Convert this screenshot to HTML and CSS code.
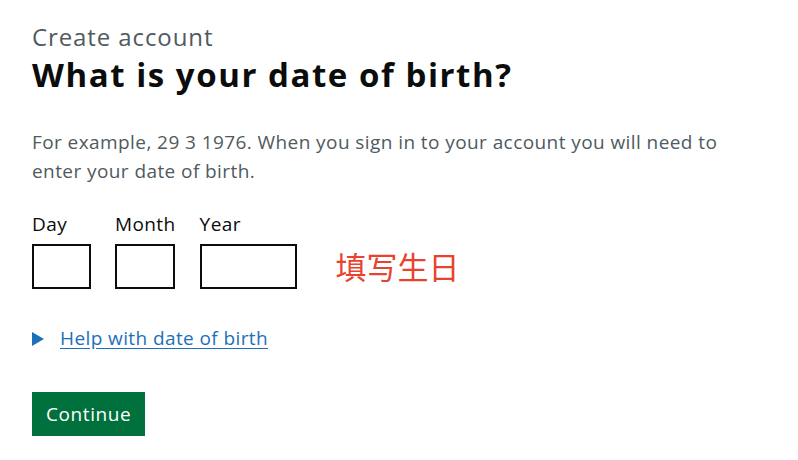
FILE: index.html
```html
<!DOCTYPE html>
<html lang="en">
<head>
  <meta charset="UTF-8">
  <title>Create account - What is your date of birth?</title>
  <meta name="viewport" content="width=device-width, initial-scale=1.0">
  <link rel="stylesheet" href="styles.css">
</head>
<body>
  <main class="page">
    <span class="caption">Create account</span>
    <h1 class="heading">What is your date of birth?</h1>

    <p class="hint">For example, 29 3 1976. When you sign in to your account you will need to enter your date of birth.</p>

    <div class="date-row">
      <div class="date-input">
        <div class="date-item">
          <label for="dob-day">Day</label>
          <input class="field field-day" id="dob-day" type="text" inputmode="numeric">
        </div>
        <div class="date-item">
          <label for="dob-month">Month</label>
          <input class="field field-month" id="dob-month" type="text" inputmode="numeric">
        </div>
        <div class="date-item">
          <label for="dob-year">Year</label>
          <input class="field field-year" id="dob-year" type="text" inputmode="numeric">
        </div>
      </div>
      <!-- 备注 -->
      <span class="note">填写生日</span>
    </div>

    <details class="details">
      <summary><span class="details-text">Help with date of birth</span></summary>
    </details>

    <button class="button" type="submit">Continue</button>
  </main>
</body>
</html>
```

FILE: styles.css
```css
body {
  margin: 0;
  background: #ffffff;
  color: #0b0c0c;
  font-family: "Open Sans", "Noto Sans", Arial, sans-serif;
  letter-spacing: 0.4px;
}

.page {
  padding: 20px 32px 0;
}

.caption {
  display: block;
  font-size: 24px;
  line-height: 33px;
  letter-spacing: 0.9px;
  color: #505a5f;
}

.heading {
  margin: -1px 0 31px;
  font-size: 33px;
  line-height: 45px;
  letter-spacing: 1.55px;
  font-weight: 700;
}

.hint {
  margin: 0 0 26px;
  font-size: 19px;
  line-height: 29px;
  letter-spacing: 0.42px;
  color: #505a5f;
  max-width: 720px;
}

.date-row {
  display: flex;
  align-items: flex-end;
}

.date-input {
  display: flex;
  gap: 24px;
}

.date-item label {
  display: block;
  font-size: 19px;
  line-height: 25px;
  margin-bottom: 7px;
}

.field {
  display: block;
  box-sizing: border-box;
  height: 45px;
  border: 2px solid #0b0c0c;
  border-radius: 0;
  padding: 5px;
  font: inherit;
}

.field-day {
  width: 59px;
}

.field-month {
  width: 60px;
}

.field-year {
  width: 97px;
}

.note {
  margin: 0 0 5px 39px;
  font-family: "Noto Sans CJK SC", sans-serif;
  font-size: 31px;
  line-height: 36px;
  letter-spacing: 0;
  color: #e8432f;
}

.details {
  margin: 37px 0 41px;
  font-size: 19px;
  line-height: 25px;
}

.details summary {
  display: inline-block;
  position: relative;
  padding-left: 28px;
  color: #1d70b8;
  cursor: pointer;
  list-style: none;
}

.details summary::-webkit-details-marker {
  display: none;
}

/* arrow */
.details summary::before {
  content: "";
  position: absolute;
  left: 0;
  top: 6px;
  border-style: solid;
  border-color: transparent;
  border-width: 7px 0 7px 12px;
  border-left-color: #1d70b8;
}

.details-text {
  text-decoration: underline;
  text-underline-offset: 3px;
}

.button {
  display: block;
  font: inherit;
  font-size: 19px;
  line-height: 25px;
  letter-spacing: 0.6px;
  padding: 8px 12px 7px;
  color: #ffffff;
  background: #00703c;
  border: 2px solid transparent;
  border-radius: 0;
  box-shadow: 0 2px 0 #002d18;
  cursor: pointer;
}
```
